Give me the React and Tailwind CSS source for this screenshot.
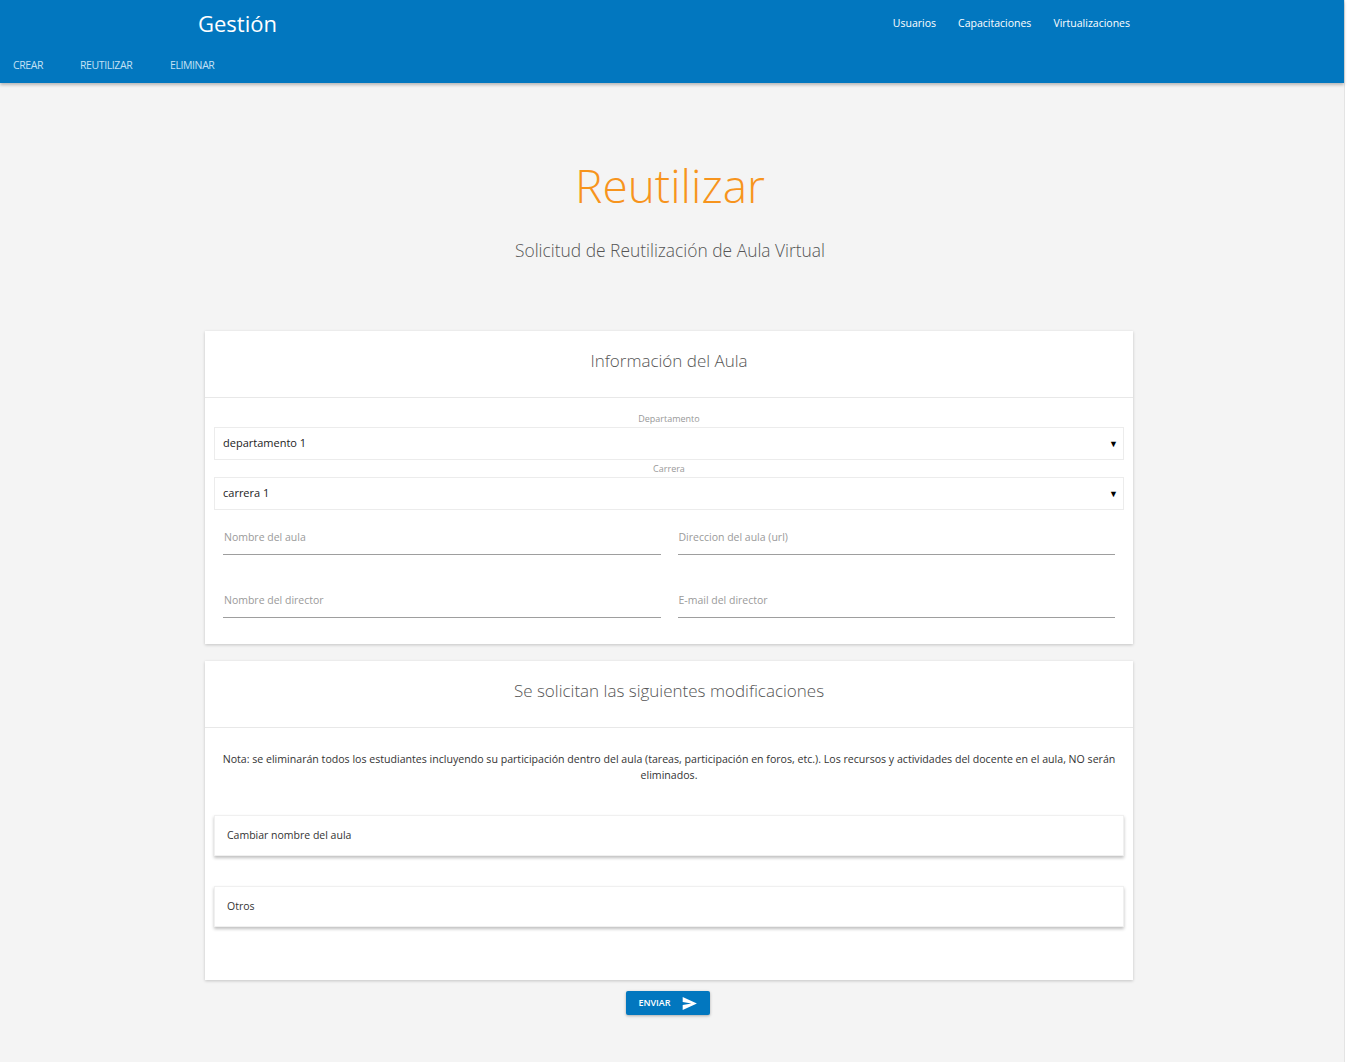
import React from 'react';

const font = { fontFamily: '"Open Sans", "Noto Sans", Arial, sans-serif' };

const SendIcon = () => (
  <svg width="15" height="13" viewBox="0 0 24 21" className="fill-white">
    <path d="M1 21L24 10.5 1 0l0 8 14 2.5L1 13z" />
  </svg>
);

const SelectField = ({ label, value }) => (
  <div className="flex flex-col">
    <p className="text-center text-[9px] text-[#999] leading-[12px] mb-[2px]">{label}</p>
    <div className="h-[33px] border border-[#ececec] bg-white flex items-center justify-between pl-[8px] pr-[5px]">
      <span className="text-[11px] text-[#222]">{value}</span>
      <span className="text-[9px] text-black">▼</span>
    </div>
  </div>
);

const TextField = ({ label }) => (
  <div className="border-b border-[#9e9e9e] pb-[7px] pl-[1px]">
    <span className="text-[10.5px] text-[#9a9a9a]">{label}</span>
  </div>
);

const OptionBox = ({ label }) => (
  <div className="h-[41px] bg-white flex items-center px-[12px] shadow-[0_2px_3px_rgba(0,0,0,0.25)] border border-[#f0f0f0]">
    <span className="text-[10.5px] text-[#333]">{label}</span>
  </div>
);

const CardHeader = ({ title }) => (
  <div className="h-[67px] border-b border-[#e8e8e8] flex justify-center pt-[18px]">
    <h3 className="text-[17px] leading-[24px] text-[#555] font-light">{title}</h3>
  </div>
);

const App = () => {
  return (
    <div style={font} className="w-[1345px] min-h-[1062px] bg-[#f4f4f4] border-r border-[#e4e4e4]">
      {/* Header */}
      <header className="bg-[#0277bf] h-[83px] shadow-[0_2px_3px_rgba(0,0,0,0.25)] relative z-10">
        <div className="flex justify-between items-start w-[942px] ml-[198px] h-[48px]">
          <h1 className="text-white text-[22px] leading-[22px] pt-[12px]">Gestión</h1>
          <nav className="flex gap-[22px] pt-[16px] pr-[10px] text-[10.5px] text-white">
            <a>Usuarios</a>
            <a>Capacitaciones</a>
            <a>Virtualizaciones</a>
          </nav>
        </div>
        <nav className="flex text-[10.5px] text-[#c4e1f5] tracking-[-0.4px] pl-[13px] pt-[10px]">
          <a className="w-[67px]">CREAR</a>
          <a className="w-[90px]">REUTILIZAR</a>
          <a>ELIMINAR</a>
        </nav>
      </header>

      {/* Title */}
      <div className="flex flex-col items-center pt-[72px] pr-[4px]">
        <h2 className="text-[#f7941d] text-[46px] leading-[60px] font-light">Reutilizar</h2>
        <p className="text-[#555] text-[17.4px] font-light mt-[22px]">Solicitud de Reutilización de Aula Virtual</p>
      </div>

      {/* Card 1 */}
      <div className="w-[928px] ml-[205px] mt-[68px] bg-white shadow-[0_1px_3px_rgba(0,0,0,0.2)]">
        <CardHeader title="Información del Aula" />
        <div className="px-[9px] pt-[15px] pb-[26px]">
          <SelectField label="Departamento" value="departamento 1" />
          <div className="mt-[3px]">
            <SelectField label="Carrera" value="carrera 1" />
          </div>
          <div className="grid grid-cols-2 gap-x-[17px] gap-y-[31px] px-[9px] mt-[13px]">
            <TextField label="Nombre del aula" />
            <TextField label="Direccion del aula (url)" />
            <TextField label="Nombre del director" />
            <TextField label="E-mail del director" />
          </div>
        </div>
      </div>

      {/* Card 2 */}
      <div className="w-[928px] ml-[205px] mt-[17px] bg-white shadow-[0_1px_3px_rgba(0,0,0,0.2)]">
        <CardHeader title="Se solicitan las siguientes modificaciones" />
        <div className="px-[9px] pt-[23px] pb-[53px]">
          <p className="text-center text-[10.6px] leading-[16px] text-[#333] px-[4px]">
            Nota: se eliminarán todos los estudiantes incluyendo su participación dentro del aula (tareas, participación en foros, etc.). Los recursos y actividades del docente en el aula, NO serán eliminados.
          </p>
          <div className="mt-[32px] flex flex-col gap-[30px]">
            <OptionBox label="Cambiar nombre del aula" />
            <OptionBox label="Otros" />
          </div>
        </div>
      </div>

      {/* Button */}
      <div className="flex justify-center mt-[11px] pr-[9px] pb-[40px]">
        <button className="bg-[#0277bf] h-[24px] w-[84px] rounded-[2px] shadow-[0_1px_3px_rgba(0,0,0,0.3)] flex items-center justify-center gap-[11px] text-white text-[9px] font-semibold">
          ENVIAR <SendIcon />
        </button>
      </div>
    </div>
  );
};

export default App;
